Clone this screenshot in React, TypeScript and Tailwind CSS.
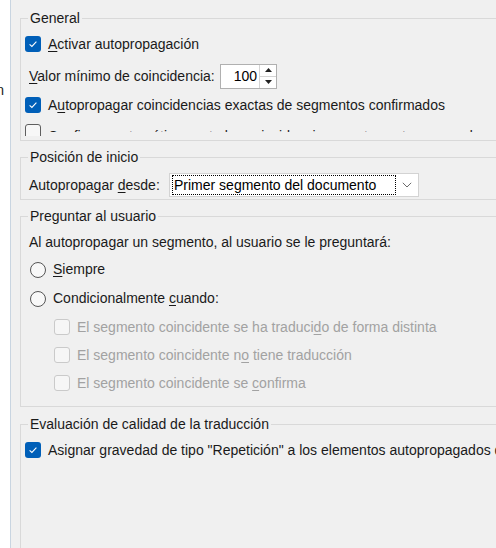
import type { ReactNode } from 'react';

const CheckOn = () => (
  <span className="flex h-4 w-4 shrink-0 items-center justify-center rounded-[3px] bg-[#005fb8]">
    <svg width="10" height="8" viewBox="0 0 10 8" fill="none">
      <path d="M1.6 4.3 L3.9 6.4 L8.4 1.7" stroke="white" strokeWidth="1.1" />
    </svg>
  </span>
);

const CheckOff = ({ disabled }: { disabled?: boolean }) => (
  <span
    className={
      disabled
        ? 'h-4 w-4 shrink-0 rounded-[3px] border border-[#cacaca] bg-[#f6f6f6]'
        : 'h-4 w-4 shrink-0 rounded-[3px] border border-[#5f5f5f] bg-[#f7f7f7]'
    }
  />
);

const Radio = () => <span className="h-4 w-4 shrink-0 rounded-full border border-[#555555] bg-[#f8f8f8]" />;

const Group = ({ title, className, children }: { title: string; className?: string; children: ReactNode }) => (
  <fieldset className={`w-[520px] shrink-0 border border-r-0 border-[#d9d9d9] ${className ?? ''}`}>
    <legend className="ml-[7px] px-[2px] leading-[20px]">{title}</legend>
    {children}
  </fieldset>
);

export default function App() {
  return (
    <div className="flex h-[548px] w-[496px] overflow-hidden bg-[#f0f0f0] font-['Liberation_Sans',Arial,sans-serif] text-[14px] text-[#1a1a1a]">
      {/* panel izquierdo recortado */}
      <div className="flex w-[11px] shrink-0 flex-col overflow-hidden border-r border-[#c9d5e1] bg-white">
        <div className="mt-[80px] flex justify-end pr-[6px] leading-[20px] whitespace-nowrap">Autopropagación</div>
      </div>

      <div className="flex min-w-0 flex-1 flex-col pl-[9px]">
        <Group title="General" className="mt-[8px]">
          <div className="h-[108px] overflow-hidden pl-[4px] pt-[2px]">
            <div className="flex h-[28px] items-center gap-[7px] whitespace-nowrap">
              <CheckOn />
              <span>
                <u className="underline-offset-2">A</u>ctivar autopropagación
              </span>
            </div>
            <div className="flex h-[36px] items-center pl-[4px] whitespace-nowrap">
              <span className="w-[191px]">
                <u className="underline-offset-2">V</u>alor mínimo de coincidencia:
              </span>
              <div className="flex h-[25px] w-[57px] border border-[#b0b0b0] bg-white">
                <span className="flex flex-1 items-center justify-end pr-[2px] text-black">100</span>
                <div className="flex w-[17px] flex-col border-l border-[#d4d4d4]">
                  <span className="flex flex-1 items-center justify-center border-b border-[#d4d4d4]">
                    <svg width="7" height="4" viewBox="0 0 7 4">
                      <path d="M0 4 L3.5 0 L7 4 Z" fill="#222" />
                    </svg>
                  </span>
                  <span className="flex flex-1 items-center justify-center">
                    <svg width="7" height="4" viewBox="0 0 7 4">
                      <path d="M0 0 L7 0 L3.5 4 Z" fill="#222" />
                    </svg>
                  </span>
                </div>
              </div>
            </div>
            <div className="flex h-[22px] items-center gap-[7px] whitespace-nowrap">
              <CheckOn />
              <span>
                A<u className="underline-offset-2">u</u>topropagar coincidencias exactas de segmentos confirmados
              </span>
            </div>
            <div className="mt-[8px] flex items-start gap-[7px] whitespace-nowrap">
              <CheckOff />
              <span className="h-[8px] overflow-hidden pt-[2px] leading-[20px]">
                Confirmar automáticamente las coincidencias exactas autopropagadas
              </span>
            </div>
          </div>
          <div className="h-[4px]" />
        </Group>

        <Group title="Posición de inicio" className="mt-[6px]">
          <div className="flex items-center pb-[2px] pl-[8px] pt-[6px] whitespace-nowrap">
            <span className="w-[140px]">
              Autopropagar <u className="underline-offset-2">d</u>esde:
            </span>
            <div className="flex h-[24px] w-[250px] items-center border border-[#d3d3d3] bg-white pl-[2px]">
              <span className="flex h-[20px] w-[224px] items-center border border-dotted border-black pl-[1px] text-black">
                Primer segmento del documento
              </span>
              <span className="flex flex-1 items-center justify-center">
                <svg width="10" height="6" viewBox="0 0 10 6" fill="none">
                  <path d="M0.8 0.8 L5 5 L9.2 0.8" stroke="#6a6a6a" strokeWidth="1" />
                </svg>
              </span>
            </div>
          </div>
        </Group>

        <Group title="Preguntar al usuario" className="mt-[6px]">
          <div className="pb-[9px] pl-[8px] pt-[6px] whitespace-nowrap">
            <div className="leading-[20px]">Al autopropagar un segmento, al usuario se le preguntará:</div>
            <div className="mt-[3px] ml-[1px] flex h-[29px] items-center gap-[7px]">
              <Radio />
              <span>
                <u className="underline-offset-2">S</u>iempre
              </span>
            </div>
            <div className="ml-[1px] flex h-[29px] items-center gap-[7px]">
              <Radio />
              <span>
                Condicionalmente <u className="underline-offset-2">c</u>uando:
              </span>
            </div>
            <div className="ml-[25px] flex h-[28px] items-center gap-[7px] text-[#a2a2a2]">
              <CheckOff disabled />
              <span>
                El segmento coincidente se ha traduci<u className="underline-offset-2">d</u>o de forma distinta
              </span>
            </div>
            <div className="ml-[25px] flex h-[28px] items-center gap-[7px] text-[#a2a2a2]">
              <CheckOff disabled />
              <span>
                El segmento coincidente n<u className="underline-offset-2">o</u> tiene traducción
              </span>
            </div>
            <div className="ml-[25px] flex h-[28px] items-center gap-[7px] text-[#a2a2a2]">
              <CheckOff disabled />
              <span>
                El segmento coincidente se <u className="underline-offset-2">c</u>onfirma
              </span>
            </div>
          </div>
        </Group>

        <Group title="Evaluación de calidad de la traducción" className="mt-[7px]">
          <div className="h-[160px] pl-[4px] pt-[2px] whitespace-nowrap">
            <div className="flex h-[28px] items-center gap-[7px]">
              <CheckOn />
              <span>Asignar gravedad de tipo "Repetición" a los elementos autopropagados de la memoria</span>
            </div>
          </div>
        </Group>
      </div>
    </div>
  );
}
